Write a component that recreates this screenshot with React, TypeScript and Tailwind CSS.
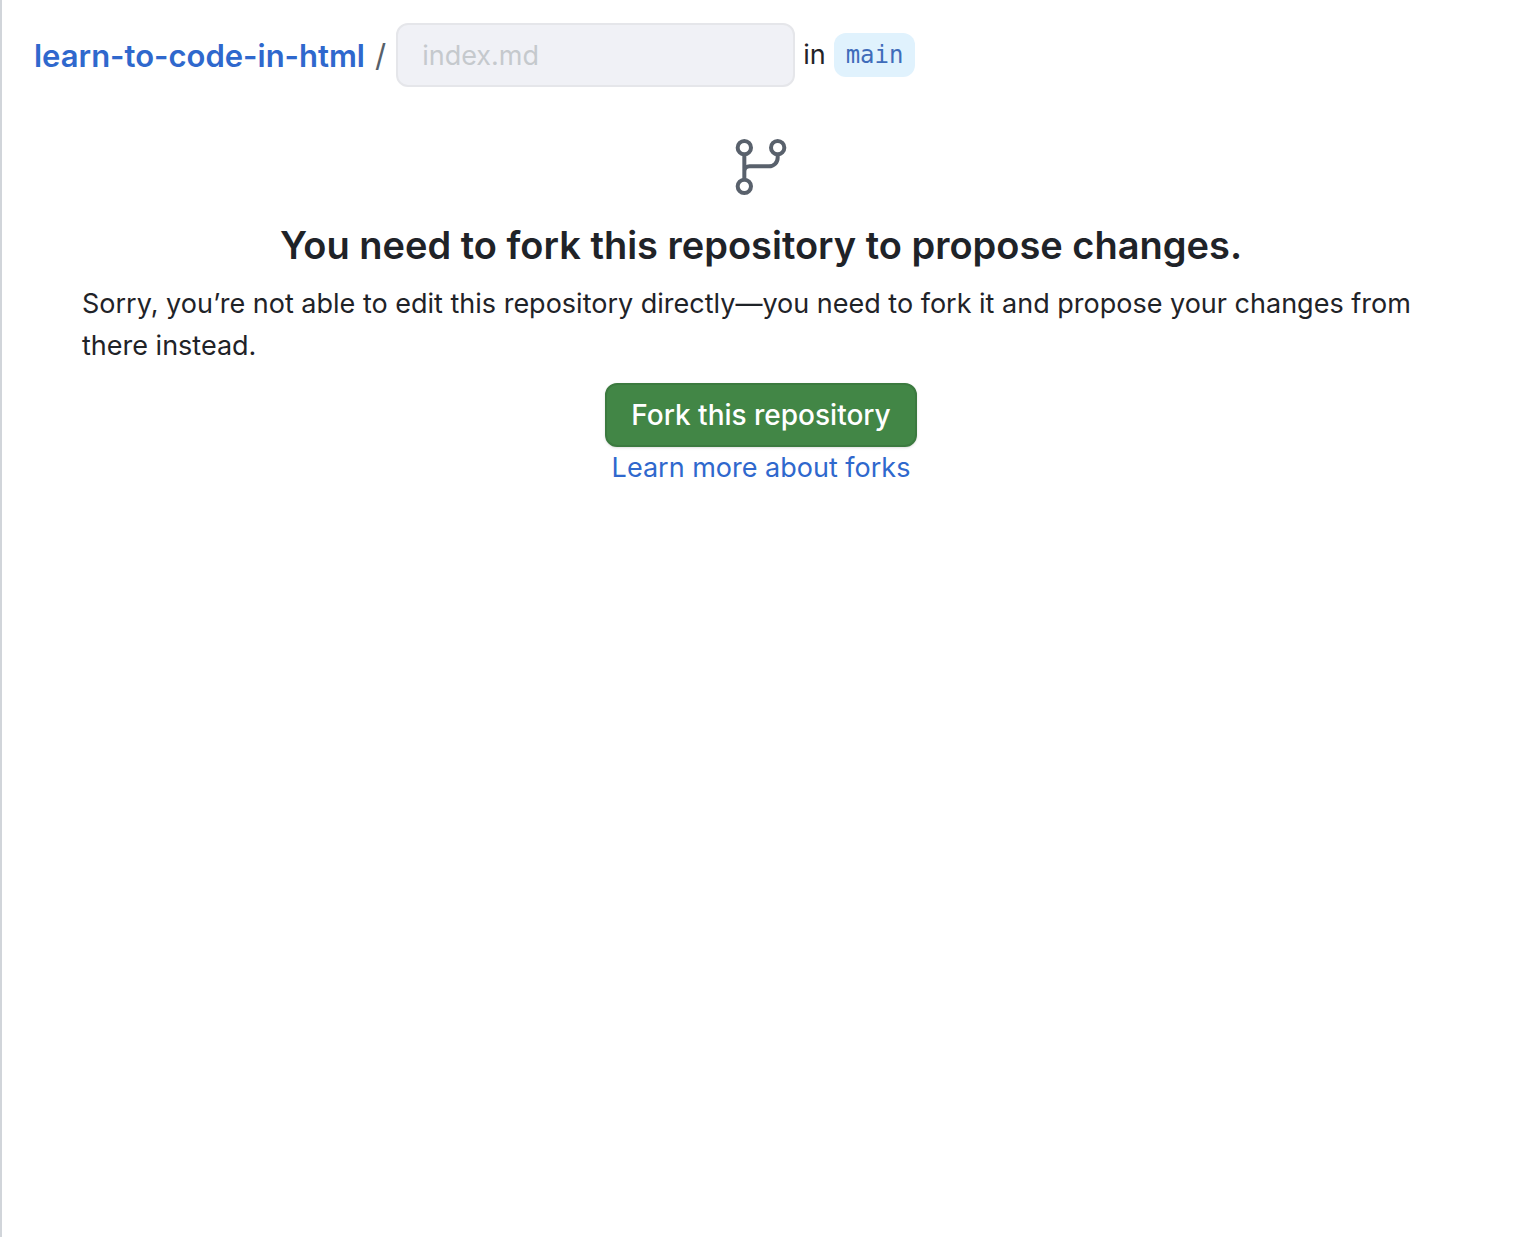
export default function App() {
  return (
    <div className="min-h-screen border-l-2 border-[#d1d5da] bg-white font-['Inter',sans-serif] text-[27px] leading-[42px] text-[#1f2328]">
      <header className="flex items-center px-8 pt-[23px]">
        <a href="#repo" className="pt-0.5 text-[31px] font-semibold text-[#2f68cd]">learn-to-code-in-html</a>
        <span className="mx-2.5 pt-0.5 text-[31px] text-[#57606a]">/</span>
        <input
          aria-label="File name"
          placeholder="index.md"
          disabled
          className="h-16 w-[399px] rounded-xl border-2 border-[#e5e6ea] bg-[#f0f1f6] px-6 placeholder:text-[#c5c9cd]"
        />
        <span className="mx-2">in</span>
        <a href="#main" className="rounded-xl bg-[#e0f2fd] px-3 font-['DejaVu_Sans_Mono',monospace] text-[24px] leading-[44px] text-[#3f6cba]">main</a>
      </header>
      <main className="flex flex-col items-center px-20 pt-12">
        <svg width="64" height="64" viewBox="0 0 24 24" fill="none" stroke="#59616c" strokeWidth="1.5" aria-hidden="true">
          <circle cx="5.75" cy="4.75" r="2.5" />
          <circle cx="18.25" cy="4.75" r="2.5" />
          <circle cx="5.75" cy="19.25" r="2.5" />
          <path d="M5.75 7.25v9.500M18.250 7.250v1.250a3.250 3.250 0 0 1-3.250 3.250H7.750a2 2 0 0 0-2 2" />
        </svg>
        <h1 className="mt-4 text-[38px] leading-[60px] font-semibold">You need to fork this repository to propose changes.</h1>
        <p className="mt-2">Sorry, you’re not able to edit this repository directly—you need to fork it and propose your changes from there instead.</p>
        <button className="mt-4 h-16 rounded-xl border-2 border-[#3b7a3f] bg-[#428646] px-6 text-[28px] font-medium text-white shadow-sm">Fork this repository</button>
        <a href="#forks" className="text-[#2f68cd]">Learn more about forks</a>
      </main>
    </div>
  );
}
